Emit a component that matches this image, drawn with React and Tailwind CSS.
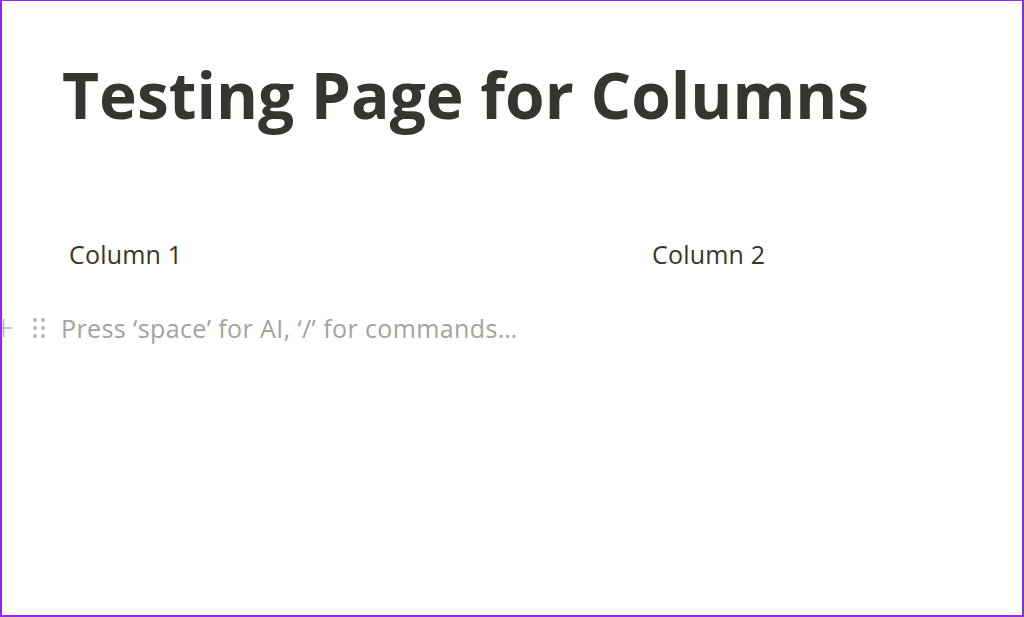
const FONT = { fontFamily: '"Open Sans", "Noto Sans", sans-serif' };

function DragHandle() {
  return (
    <svg width="14" height="22" viewBox="0 0 14 22" className="text-[#b5b5b3]" fill="currentColor">
      <circle cx="3" cy="3" r="2" />
      <circle cx="11" cy="3" r="2" />
      <circle cx="3" cy="11" r="2" />
      <circle cx="11" cy="11" r="2" />
      <circle cx="3" cy="19" r="2" />
      <circle cx="11" cy="19" r="2" />
    </svg>
  );
}

// the add-block "+" sits mostly off the left edge of the page
function PlusCut() {
  return (
    <svg width="12" height="20" viewBox="0 0 12 20" className="text-[#b5b5b3]" stroke="currentColor" strokeWidth="1.6">
      <path d="M1.5 1v18" />
      <path d="M0 10h10" />
    </svg>
  );
}

export default function App() {
  return (
    <div
      className="h-[617px] w-full overflow-hidden bg-white border-[#8a2cf2] border-t border-b-2 border-l-2 border-r-2 text-[#37352f]"
      style={FONT}
    >
      <h1 className="pl-[60px] pt-[56px] text-[64px] font-bold leading-[1.2] whitespace-nowrap">
        Testing Page for Columns
      </h1>

      <div className="mt-[103px] grid grid-cols-[583px_1fr] pl-[67px]">
        <div className="text-[25px] leading-[34px] tracking-[0.2px]">Column 1</div>
        <div className="text-[25px] leading-[34px] tracking-[0.2px]">Column 2</div>
      </div>

      <div className="mt-[40px] flex items-center">
        <div className="flex w-[59px] items-center">
          <PlusCut />
          <span className="ml-[18px]">
            <DragHandle />
          </span>
        </div>
        <div className="text-[25px] leading-[34px] tracking-[0.4px] text-[#a3a3a1] whitespace-nowrap">
          Press ‘space’ for AI, ‘/’ for commands…
        </div>
      </div>
    </div>
  );
}
